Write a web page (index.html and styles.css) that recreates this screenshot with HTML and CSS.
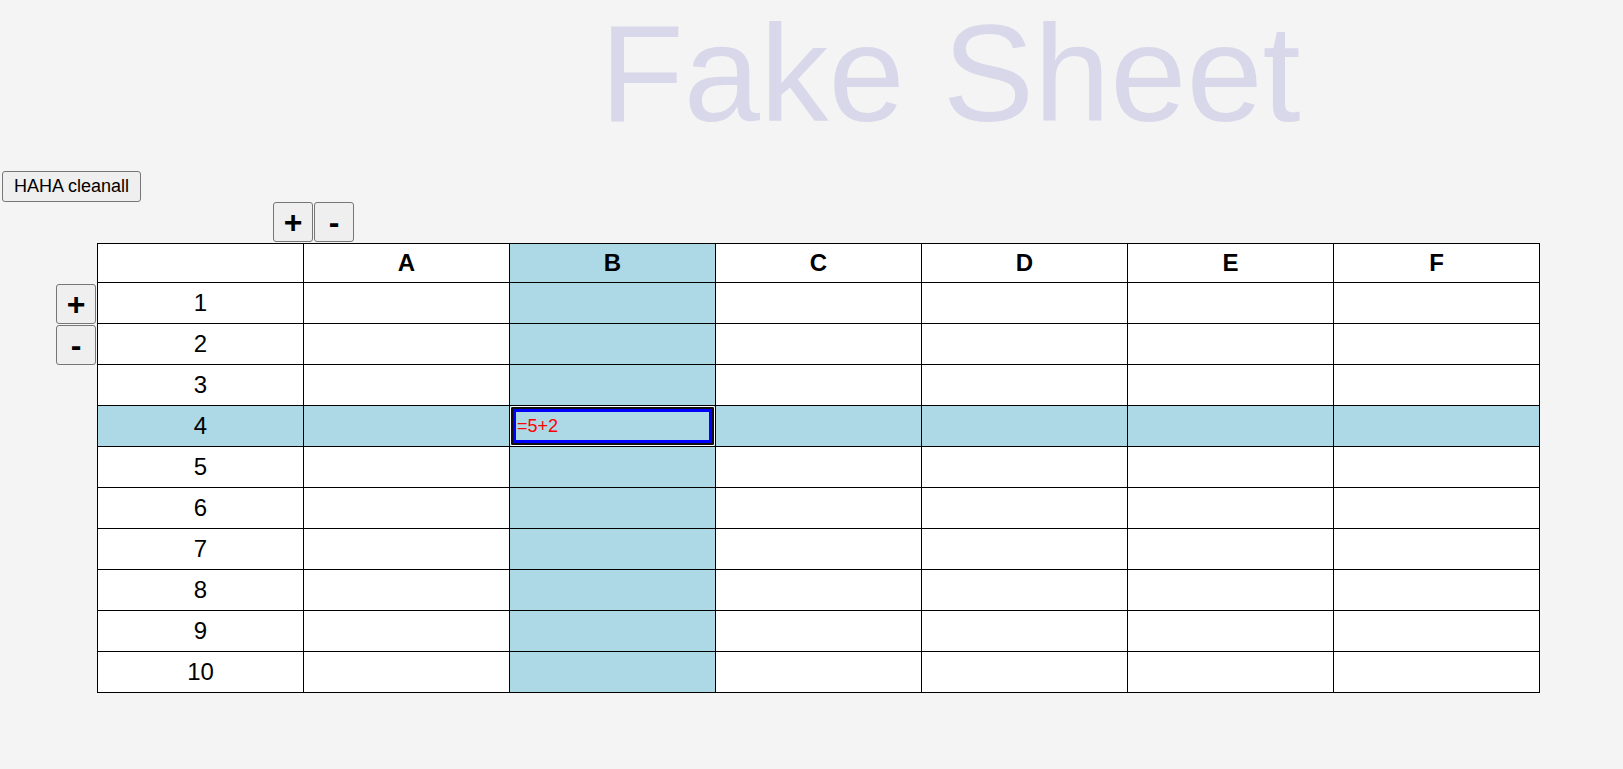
FILE: index.html
```html
<!DOCTYPE html>
<html>
<head>
<meta charset="utf-8">
<title>Fake Sheet</title>
<link rel="stylesheet" href="styles.css">
</head>
<body>
<h1 class="title">Fake Sheet</h1>
<div class="toolbar"><button class="btn-clean">HAHA cleanall</button></div>
<div class="col-ctrl">
  <button class="sq-btn">+</button>
  <button class="sq-btn">-</button>
</div>
<div class="main">
  <div class="row-ctrl">
    <button class="sq-btn">+</button>
    <button class="sq-btn">-</button>
  </div>
  <table class="sheet">
    <colgroup><col><col><col><col><col><col><col></colgroup>
    <tr class="head"><th></th><th>A</th><th class="hl">B</th><th>C</th><th>D</th><th>E</th><th>F</th></tr>
    <tr><td>1</td><td></td><td class="hl"></td><td></td><td></td><td></td><td></td></tr>
    <tr><td>2</td><td></td><td class="hl"></td><td></td><td></td><td></td><td></td></tr>
    <tr><td>3</td><td></td><td class="hl"></td><td></td><td></td><td></td><td></td></tr>
    <tr class="hlrow"><td>4</td><td></td><td class="active"><div class="cell-input">=5+2</div></td><td></td><td></td><td></td><td></td></tr>
    <tr><td>5</td><td></td><td class="hl"></td><td></td><td></td><td></td><td></td></tr>
    <tr><td>6</td><td></td><td class="hl"></td><td></td><td></td><td></td><td></td></tr>
    <tr><td>7</td><td></td><td class="hl"></td><td></td><td></td><td></td><td></td></tr>
    <tr><td>8</td><td></td><td class="hl"></td><td></td><td></td><td></td><td></td></tr>
    <tr><td>9</td><td></td><td class="hl"></td><td></td><td></td><td></td><td></td></tr>
    <tr><td>10</td><td></td><td class="hl"></td><td></td><td></td><td></td><td></td></tr>
  </table>
</div>
</body>
</html>
```
FILE: styles.css
```css
html, body {
  margin: 0;
  padding: 0;
}
body {
  background: #f4f4f4;
  font-family: "Liberation Sans", Arial, sans-serif;
  color: #000;
}
.title {
  margin: 0 0 0 600px;
  font-size: 137px;
  line-height: 147px;
  font-weight: normal;
  color: #d9d8ea;
  white-space: nowrap;
}
.toolbar {
  margin-top: 24px;
  padding-left: 2px;
  height: 31px;
}
.btn-clean {
  height: 31px;
  width: 139px;
  padding: 0;
  font-family: "Liberation Sans", Arial, sans-serif;
  font-size: 18px;
  color: #000;
  background: #efefef;
  border: 1px solid #767676;
  border-radius: 3px;
}
.col-ctrl {
  display: flex;
  gap: 1px;
  margin-left: 273px;
  height: 40px;
  margin-bottom: 1px;
}
.sq-btn {
  width: 40px;
  height: 40px;
  padding: 0;
  font-family: "Liberation Sans", Arial, sans-serif;
  font-size: 32px;
  font-weight: bold;
  line-height: 1;
  color: #000;
  background: #efefef;
  border: 1px solid #767676;
  border-radius: 3px;
}
.main {
  display: flex;
  align-items: flex-start;
}
.row-ctrl {
  display: flex;
  flex-direction: column;
  gap: 1px;
  margin-left: 56px;
  margin-top: 41px;
  margin-right: 1px;
}
.sheet {
  border-collapse: collapse;
  table-layout: fixed;
  width: 1443px;
  background: #fff;
  font-size: 24px;
}
.sheet th, .sheet td {
  border: 1px solid #000;
  padding: 0;
  text-align: center;
  vertical-align: middle;
}
.sheet th {
  font-weight: bold;
}
.sheet tr {
  height: 41px;
}
.sheet tr.head {
  height: 39px;
}
.sheet .hl, .sheet .hlrow td {
  background: #add8e6;
}
.sheet td.active {
  padding: 0;
  background: #add8e6;
}
.cell-input {
  box-sizing: border-box;
  height: 40px;
  padding-left: 6px;
  border: 1px solid #fff;
  border-radius: 2px;
  box-shadow: inset 0 0 0 2px #101010, inset 0 0 0 5px #0000ff;
  color: #ff0000;
  font-size: 18px;
  line-height: 39px;
  text-align: left;
}
```
